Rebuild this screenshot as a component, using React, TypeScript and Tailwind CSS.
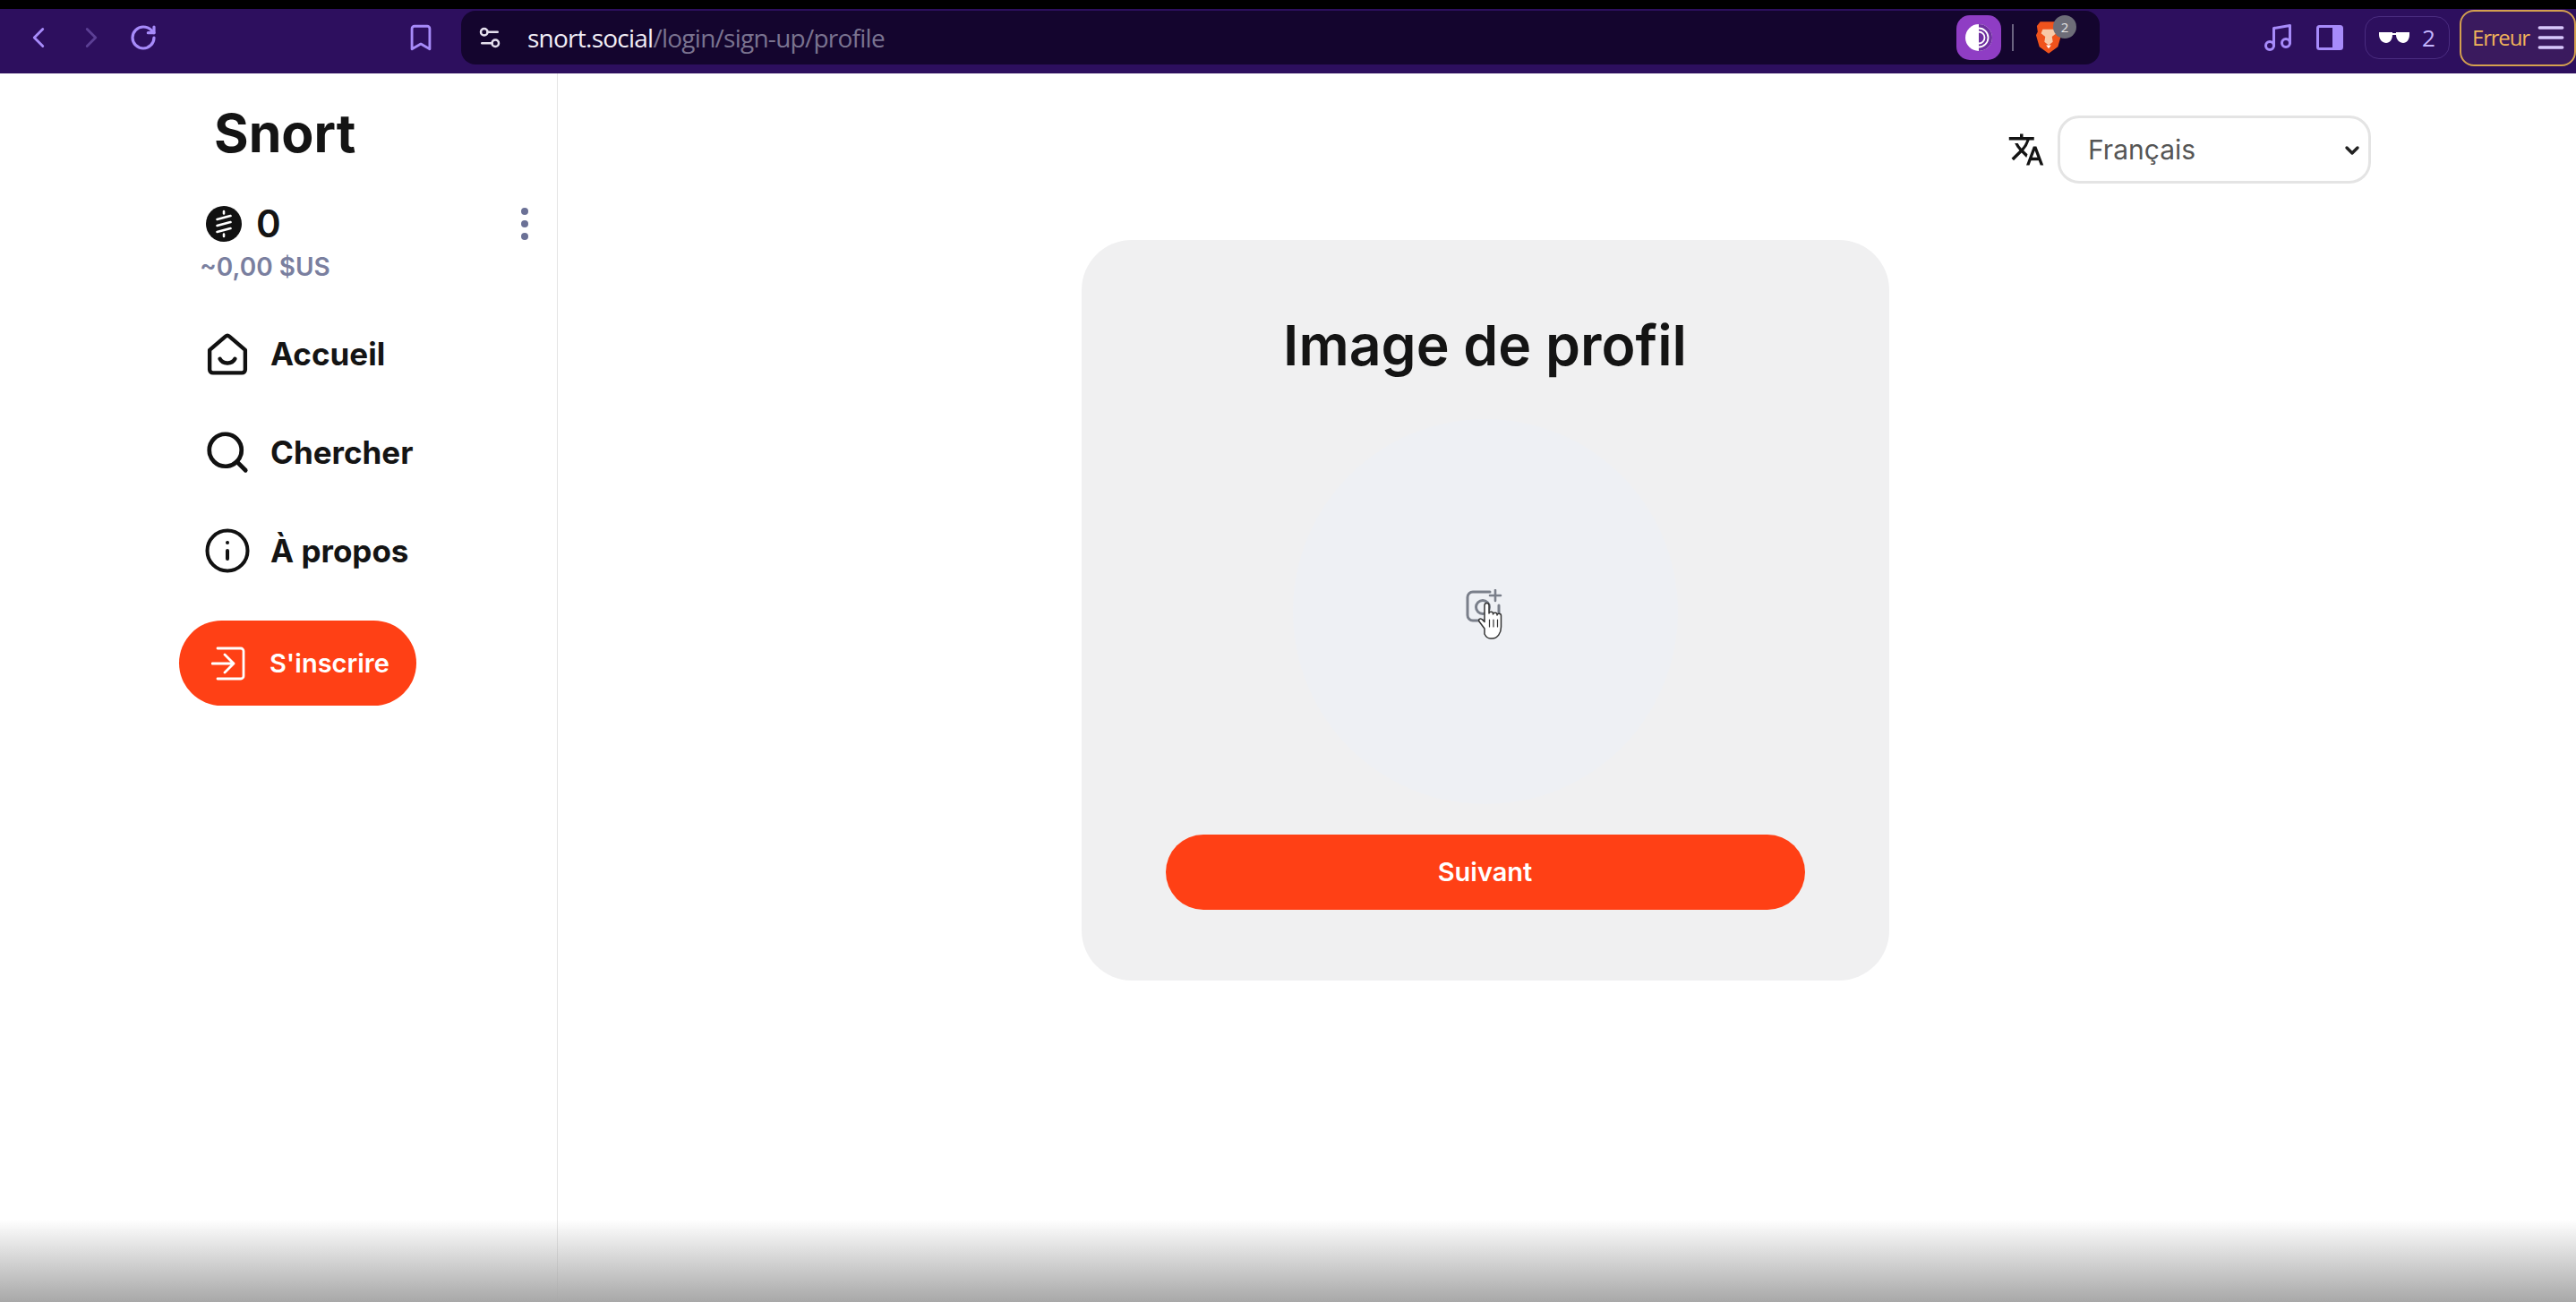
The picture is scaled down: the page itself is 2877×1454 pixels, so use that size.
import React from "react";
import { ChevronLeft, ChevronRight, RotateCw, Bookmark, Settings2, Music, Menu, Info, Search, ChevronDown } from "lucide-react";
import { MdTranslate } from "react-icons/md";

/* ── Inline drawings ─────────────────────────────────── */
function HomeIcon() {
  return (
    <svg width="46" height="49" viewBox="0 0 44 46" fill="none" stroke="#111" strokeWidth="4.2" strokeLinecap="round" strokeLinejoin="round">
      <path d="M3 18.500 20 4a3 3 0 0 1 4 0l17 14.500v21a3.500 3.500 0 0 1-3.500 3.500h-31A3.500 3.500 0 0 1 3 39.500z" />
      <path d="M14 28c3 6 13 6 16 0" />
    </svg>
  );
}

function SatsIcon() {
  return (
    <svg width="40" height="40" viewBox="0 0 40 40">
      <circle cx="20" cy="20" r="20" fill="#111" />
      <g stroke="#fff" strokeWidth="2.6" strokeLinecap="round" fill="none">
        <path d="M20 6v2.500M20 31.500v2.500" />
        <path d="M12.500 15 27.500 11M12.500 22 27.500 18M12.500 29 27.500 25" />
      </g>
    </svg>
  );
}

function SignUpIcon() {
  return (
    <svg width="38" height="38" viewBox="0 0 38 38" fill="none" stroke="#fff" strokeWidth="2.800" strokeLinecap="round" strokeLinejoin="round">
      <path d="M7 2h26a3 3 0 0 1 3 3v28a3 3 0 0 1-3 3H7" />
      <path d="M1 19h24M15 9l10 10-10 10" />
    </svg>
  );
}

function TorIcon() {
  return (
    <svg width="50" height="50" viewBox="0 0 50 50">
      <rect width="50" height="50" rx="15" fill="#8f3dc4" />
      <circle cx="25" cy="25" r="15" fill="#fff" />
      <path d="M25 10a15 15 0 0 1 0 30z" fill="#6f2fa0" />
      <g fill="none" stroke="#fff" strokeWidth="1.800">
        <path d="M25 14.500a10.500 10.500 0 0 1 0 21" />
        <path d="M25 18.500a6.500 6.500 0 0 1 0 13" />
      </g>
    </svg>
  );
}

function BraveIcon() {
  return (
    <svg width="30" height="38" viewBox="0 0 32 40">
      <path d="M6 1h20l4 5-1 7 2 4-4 14-11 8-11-8L1 17l2-4-1-7z" fill="#f0531c" />
      <path d="M9 10h14l2 5-5 4 1 6-5 4-5-4 1-6-5-4z" fill="#f8c9a8" />
      <path d="M13 29h6l-3 4z" fill="#fff" />
    </svg>
  );
}

function GlassesIcon() {
  return (
    <svg width="34" height="14" viewBox="0 0 34 14" fill="#fff">
      <path d="M0 1h15v3c0 5-3 9-7 9S0 9 0 4zM19 1h15v3c0 5-3 9-7 9s-8-4-8-9z" />
      <path d="M14 2h6v2h-6z" />
    </svg>
  );
}

function PanelIcon() {
  return (
    <svg width="30" height="28" viewBox="0 0 30 28" fill="none">
      <rect x="1.500" y="1.500" width="27" height="25" rx="2" stroke="#a78bfa" strokeWidth="3" />
      <rect x="18" y="2" width="10" height="24" fill="#a78bfa" />
    </svg>
  );
}

function AddImageCursor() {
  return (
    <svg width="46" height="58" viewBox="0 0 46 58" fill="none" className="mt-[8px]">
      <path d="M28 3H9a6 6 0 0 0-6 6v20a6 6 0 0 0 6 6h12" stroke="#7a7f8a" strokeWidth="3" strokeLinecap="round" />
      <circle cx="20" cy="20" r="7.500" stroke="#7a7f8a" strokeWidth="3" />
      <path d="M34 1v12M28 7h12" stroke="#7a7f8a" strokeWidth="2.600" strokeLinecap="round" />
      <path d="M38 18v8" stroke="#7a7f8a" strokeWidth="3" strokeLinecap="round" />
      <path
        d="M22 44 16 36c-1.500-2 1-4 3-2.500l3 3V18c0-3.500 5-3.500 5 0v9c0-2.500 4.500-2.500 4.500 0v1c0-2.500 4.500-2.500 4.500 0v1c0-2.500 4.500-2.500 4.500.5V42c0 7-4 13-10 13h-2c-3 0-5-2-6.500-5z"
        fill="#fff"
        stroke="#333"
        strokeWidth="1.500"
        strokeLinejoin="round"
      />
      <path d="M27.500 34v8M32 34v8M36.500 34v8" stroke="#333" strokeWidth="1.200" strokeLinecap="round" />
    </svg>
  );
}

/* ── Browser chrome ──────────────────────────────────── */
function BrowserBar() {
  return (
    <header className="flex h-[72px] shrink-0 items-center bg-[#2d0f5e] pb-[8px] pl-[24px]">
      <div className="flex w-[491px] shrink-0 items-center">
        <ChevronLeft size={38} strokeWidth={1.8} className="text-[#a78bfa]" />
        <ChevronRight size={38} strokeWidth={1.8} className="ml-[21px] text-[#5b3f94]" />
        <RotateCw size={32} strokeWidth={2.400} className="ml-[23px] text-[#a78bfa]" />
        <Bookmark size={34} strokeWidth={2} className="ml-[277px] text-[#a78bfa]" />
      </div>
      <div className="flex h-[60px] w-[1830px] shrink-0 items-center rounded-[16px] bg-[#14052e] pl-[17px] pr-[42px]">
        <Settings2 size={30} strokeWidth={2} className="text-[#e5e0ee]" />
        <div className="ml-[27px] flex-1 font-['Open_Sans',sans-serif] text-[28px] tracking-[-0.75px]">
          <span className="text-[#f1eef6]">snort.social</span>
          <span className="text-[#7a7390]">/login/sign-up/profile</span>
        </div>
        <TorIcon />
        <div className="ml-[12px] h-[30px] w-[2px] bg-[#6b6480]" />
        <div className="relative ml-[24px]">
          <BraveIcon />
          <span className="absolute -right-[16px] -top-[6px] flex h-[26px] w-[26px] items-center justify-center rounded-full bg-[#6d6d78] font-['Open_Sans',sans-serif] text-[15px] text-[#e5e5e5]">2</span>
        </div>
      </div>
      <Music size={36} strokeWidth={2} className="ml-[181px] text-[#a78bfa]" />
      <div className="ml-[25px]"><PanelIcon /></div>
      <div className="ml-[24px] flex h-[48px] w-[95px] items-center justify-center gap-[14px] rounded-[16px] border border-[#4a2c80]">
        <GlassesIcon />
        <span className="font-['Open_Sans',sans-serif] text-[26px] text-[#c4b5fd]">2</span>
      </div>
      <div className="ml-[11px] flex h-[63px] flex-1 items-center justify-between rounded-[16px] border-[2px] border-[#d4a04f] bg-[#3a1a5e] pl-[12px] pr-[7px]">
        <span className="font-['Open_Sans',sans-serif] text-[24px] tracking-[-1.2px] text-[#f0b35a]">Erreur</span>
        <Menu size={38} strokeWidth={2.200} className="text-[#d8c8fb]" />
      </div>
    </header>
  );
}

/* ── Left navigation ─────────────────────────────────── */
function NavRow({ icon, label }: { icon: React.ReactNode; label: string }) {
  return (
    <div className="flex h-[110px] items-center">
      <div className="flex w-[46px] items-center justify-center">{icon}</div>
      <span className="ml-[25px] text-[35px] font-bold text-[#141414]">{label}</span>
    </div>
  );
}

function Sidebar() {
  return (
    <aside className="flex w-[623px] shrink-0 flex-col border-r border-[#e4e4e4] pl-[200px]">
      <div className="ml-[39px] mt-[37px] text-[59px] font-bold leading-[60px] text-[#141414]">Snort</div>
      <div className="ml-[30px] mt-[51px] flex h-[40px] items-center">
        <SatsIcon />
        <span className="ml-[16px] text-[42px] font-semibold leading-[40px] text-[#141414]">0</span>
        <div className="ml-[268px] flex flex-col gap-[6px]">
          <span className="h-[8px] w-[8px] rounded-full bg-[#6b7196]" />
          <span className="h-[8px] w-[8px] rounded-full bg-[#6b7196]" />
          <span className="h-[8px] w-[8px] rounded-full bg-[#6b7196]" />
        </div>
      </div>
      <div className="ml-[23px] mt-[12px] text-[28px] font-semibold leading-[32px] text-[#7a7f9f]">~0,00 $US</div>
      <nav className="ml-[31px] mt-[26px] flex flex-col">
        <NavRow icon={<HomeIcon />} label="Accueil" />
        <NavRow icon={<Search size={54} strokeWidth={2.100} className="shrink-0 text-[#111]" />} label="Chercher" />
        <NavRow icon={<Info size={54} strokeWidth={1.800} className="shrink-0 text-[#111]" />} label="À propos" />
      </nav>
      <button className="mt-[23px] flex h-[95px] w-[265px] items-center rounded-full bg-[#ff4015] pl-[36px]">
        <SignUpIcon />
        <span className="ml-[27px] text-[29px] font-semibold text-white">S'inscrire</span>
      </button>
    </aside>
  );
}

/* ── Profile step ────────────────────────────────────── */
function ProfileCard() {
  return (
    <section className="mt-[63px] flex h-[827px] w-[902px] flex-col items-center rounded-[56px] bg-[#f0f0f1] px-[94px] pt-[77px]">
      <h1 className="text-[62.500px] font-semibold leading-[80px] text-[#141414]">Image de profil</h1>
      <div className="mt-[43px] flex h-[430px] w-[430px] items-center justify-center rounded-full bg-[#eef0f4]">
        <AddImageCursor />
      </div>
      <button className="mt-[34px] h-[84px] w-full shrink-0 rounded-full bg-[#ff4015] text-[29px] font-semibold text-white">Suivant</button>
    </section>
  );
}

export default function App() {
  return (
    <div className="relative flex h-[1454px] flex-col overflow-hidden bg-white font-['Inter',sans-serif]">
      <div className="h-[10px] shrink-0 bg-black" />
      <BrowserBar />
      <div className="flex flex-1">
        <Sidebar />
        <main className="flex flex-1 flex-col items-center pr-[183px]">
          <div className="mt-[47px] flex w-full items-center justify-end gap-[14px] pr-[46px]">
            <MdTranslate size={42} className="text-[#141414]" />
            <div className="relative">
              <select className="h-[76px] w-[350px] appearance-none rounded-[24px] border-[3px] border-[#e4e4e4] bg-white pl-[31px] text-[30px] text-[#555]">
                <option>Français</option>
              </select>
              <ChevronDown size={24} strokeWidth={3.4} className="absolute right-[9px] top-[27px] text-[#222]" />
            </div>
          </div>
          <ProfileCard />
        </main>
      </div>
      {/* video fade along the bottom edge */}
      <div className="pointer-events-none absolute inset-x-0 bottom-0 h-[92px] bg-gradient-to-b from-transparent to-[#a8a8a8]" />
    </div>
  );
}
